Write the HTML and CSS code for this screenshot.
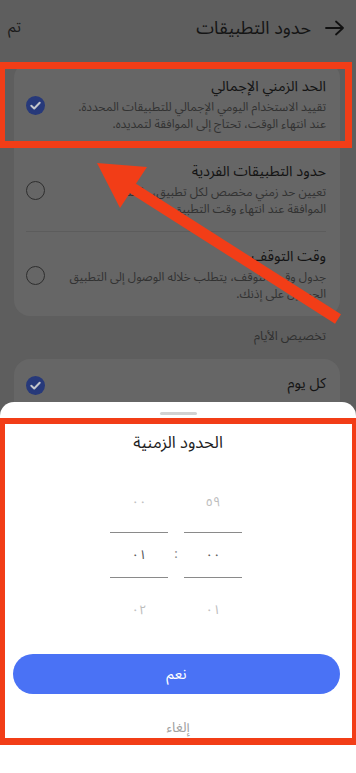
FILE: index.html
```html
<!DOCTYPE html>
<html lang="ar" dir="rtl">
<head>
<meta charset="utf-8">
<link rel="stylesheet" href="styles.css">
</head>
<body>
<div class="screen">
  <header class="topbar">
    <svg class="back" width="20" height="16" viewBox="0 0 20 16"><path d="M1 8H18M11 1.5L18 8L11 14.5" fill="none" stroke="#111" stroke-width="1.8" stroke-linecap="round" stroke-linejoin="round"/></svg>
    <h1 class="title">حدود التطبيقات</h1>
    <span class="done">تم</span>
  </header>

  <section class="card">
    <div class="row">
      <div class="texts">
        <div class="row-title">الحد الزمني الإجمالي</div>
        <div class="row-desc">تقييد الاستخدام اليومي الإجمالي للتطبيقات المحددة.<br>عند انتهاء الوقت، تحتاج إلى الموافقة لتمديده.</div>
      </div>
      <span class="check"><svg width="19" height="19" viewBox="0 0 19 19"><circle cx="9.5" cy="9.5" r="9.5" fill="#27397a"/><path d="M5.3 9.8L8.2 12.5L13.7 6.8" fill="none" stroke="#c4c6cc" stroke-width="2" stroke-linecap="round" stroke-linejoin="round"/></svg></span>
    </div>
    <div class="row">
      <div class="texts">
        <div class="row-title">حدود التطبيقات الفردية</div>
        <div class="row-desc">تعيين حد زمني مخصص لكل تطبيق، ويُطلب<br>الموافقة عند انتهاء وقت التطبيق.</div>
      </div>
      <span class="radio"></span>
    </div>
    <div class="row">
      <div class="texts">
        <div class="row-title">وقت التوقف</div>
        <div class="row-desc">جدول وقت التوقف، يتطلب خلاله الوصول إلى التطبيق<br>الحصول على إذنك.</div>
      </div>
      <span class="radio"></span>
    </div>
  </section>

  <div class="section-label">تخصيص الأيام</div>

  <section class="card card-days">
    <div class="row row-simple">
      <div class="texts"><div class="row-title">كل يوم</div></div>
      <span class="check"><svg width="19" height="19" viewBox="0 0 19 19"><circle cx="9.5" cy="9.5" r="9.5" fill="#27397a"/><path d="M5.3 9.8L8.2 12.5L13.7 6.8" fill="none" stroke="#c4c6cc" stroke-width="2" stroke-linecap="round" stroke-linejoin="round"/></svg></span>
    </div>
  </section>

  <div class="sheet">
    <div class="handle"></div>
    <div class="sheet-title">الحدود الزمنية</div>
    <div class="picker" dir="ltr">
      <div class="col">
        <div class="num faded">٠٠</div>
        <div class="num current">٠١</div>
        <div class="num faded">٠٢</div>
      </div>
      <div class="colon">:</div>
      <div class="col">
        <div class="num faded">٥٩</div>
        <div class="num current">٠٠</div>
        <div class="num faded">٠١</div>
      </div>
    </div>
    <button class="ok">نعم</button>
    <div class="cancel">إلغاء</div>
  </div>

  <div class="mark mark-top"></div>
  <div class="mark mark-sheet"></div>
  <svg class="arrow" width="356" height="773" viewBox="0 0 356 773">
    <line x1="126" y1="184" x2="338" y2="319" stroke="#f23d17" stroke-width="11"/>
    <polygon points="97,163 147,167 120,208" fill="#f23d17"/>
  </svg>
</div>
</body>
</html>
```

FILE: styles.css
```css
* { box-sizing: border-box; }
html, body { margin: 0; padding: 0; }
body {
  background: #5e5e5e;
  font-family: "Noto Sans Arabic", "Noto Naskh Arabic", "Noto Sans", "DejaVu Sans", sans-serif;
  color: #141414;
}
.screen {
  position: relative;
  width: 356px;
  height: 773px;
  overflow: hidden;
  background: #5e5e5e;
}
.topbar {
  height: 62px;
  display: flex;
  align-items: center;
  padding: 0 11px 6px 8px;
}
.back { flex: none; margin-left: 14px; }
.title {
  margin: 0;
  flex: 1;
  font-size: 18px;
  font-weight: normal;
  color: #151515;
}
.done { font-size: 15px; color: #1a1a1a; margin-top: -2px; }

.card {
  margin: 0 16px 0 14px;
  background: #666666;
  border-radius: 16px;
  padding: 0 14px 0 12px;
}
.row {
  display: flex;
  align-items: center;
  padding: 15px 0 13px;
  border-bottom: 1px solid #5c5c5c;
}
.row:last-child { border-bottom: none; }
.texts { flex: 1; min-width: 0; }
.row-title {
  font-size: 14.5px;
  line-height: 20px;
  color: #141414;
  margin-bottom: 2px;
  white-space: nowrap;
}
.row-desc {
  font-size: 12px;
  line-height: 17px;
  color: #323232;
  white-space: nowrap;
}
.check, .radio { flex: none; margin-right: 14px; width: 19px; height: 19px; }
.check svg { display: block; }
.radio {
  border: 1.5px solid #2e2e2e;
  border-radius: 50%;
}
.section-label {
  font-size: 12.5px;
  color: #303030;
  padding: 7px 30px 0 0;
  height: 43px;
}
.row-simple { padding: 15px 0 30px; }

.sheet {
  position: absolute;
  left: 0;
  right: 0;
  top: 402px;
  bottom: 0;
  background: #ffffff;
  border-radius: 14px 14px 0 0;
  display: flex;
  flex-direction: column;
  align-items: center;
}
.handle {
  margin-top: 10px;
  width: 37px;
  height: 3px;
  border-radius: 2px;
  background: #d2d2d2;
}
.sheet-title {
  margin-top: 17px;
  font-size: 16.5px;
  line-height: 22px;
  color: #222;
}
.picker {
  margin-top: 38px;
  display: flex;
  align-items: flex-start;
  margin-right: 4px;
}
.col { width: 58px; display: flex; flex-direction: column; align-items: center; }
.num {
  width: 58px;
  text-align: center;
  font-size: 13px;
  color: #bdbdbd;
}
.num.faded:first-child { height: 40px; line-height: 20px; }
.num.current {
  height: 46px;
  line-height: 44px;
  color: #555;
  border-top: 1.5px solid #8a8a8a;
  border-bottom: 1.5px solid #8a8a8a;
}
.num.faded:last-child { margin-top: 22px; line-height: 20px; }
.colon {
  width: 16px;
  text-align: center;
  font-size: 13px;
  color: #888;
  margin-top: 40px;
  line-height: 44px;
}
.ok {
  margin-top: 34px;
  width: 327px;
  height: 40px;
  border: none;
  border-radius: 20px;
  background: #4a72f5;
  color: #fff;
  font-family: inherit;
  font-size: 15px;
  margin-right: 3px;
}
.cancel {
  margin-top: 19px;
  font-size: 13.5px;
  color: #a0a0a0;
}

.mark {
  position: absolute;
  border: 6px solid #f23d17;
}
.mark-top { left: -2px; top: 62px; width: 354px; height: 86px; border-width: 7px; }
.mark-sheet { left: 0; top: 418px; width: 356px; height: 327px; border-width: 6px 4px 7px 5px; }
.arrow { position: absolute; left: 0; top: 0; pointer-events: none; }
```
